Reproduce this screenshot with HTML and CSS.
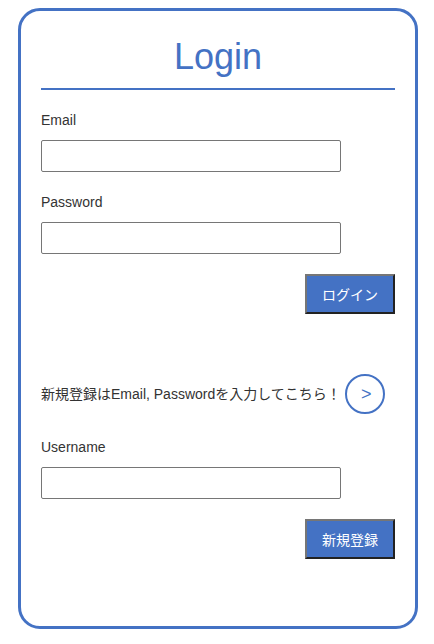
FILE: index.html
```html
<!DOCTYPE html>
<html lang="ja">
<head>
<meta charset="utf-8">
<title>Login</title>
<link rel="stylesheet" href="styles.css">
</head>
<body>
<div class="card">
  <h1 class="title">Login</h1>
  <label class="label" for="email">Email</label>
  <input class="field" id="email" type="text">
  <label class="label" for="password">Password</label>
  <input class="field" id="password" type="password">
  <div class="actions">
    <button class="btn" type="button">ログイン</button>
  </div>
  <div class="signup-row">
    <span class="signup-text">新規登録はEmail, Passwordを入力してこちら！</span>
    <button class="circle-btn" type="button">&gt;</button>
  </div>
  <label class="label label-user" for="username">Username</label>
  <input class="field" id="username" type="text">
  <div class="actions">
    <button class="btn" type="button">新規登録</button>
  </div>
</div>
</body>
</html>
```

FILE: styles.css
```css
body {
  margin: 8px;
  font-family: "Liberation Sans", Arial, "Noto Sans CJK JP", sans-serif;
  color: #333;
  background: #fff;
}

.card {
  margin-left: 10px;
  width: 400px;
  height: 621px;
  box-sizing: border-box;
  border: 3px solid #4472c4;
  border-radius: 22px;
  padding: 25px 20px 0;
}

.title {
  margin: 0;
  font-size: 36px;
  font-weight: normal;
  line-height: 42px;
  text-align: center;
  color: #4472c4;
  padding-bottom: 10px;
  border-bottom: 2px solid #4472c4;
}

.label {
  display: block;
  font-size: 14px;
  line-height: 16px;
  margin-top: 22px;
  margin-bottom: 12px;
}

.label-user {
  margin-top: 25px;
}

.field {
  display: block;
  box-sizing: border-box;
  width: 300px;
  height: 32px;
  margin: 0;
  border: 1px solid #767676;
  border-radius: 2px;
  background: #fff;
}

.actions {
  display: flex;
  justify-content: flex-end;
  margin-top: 20px;
}

.btn {
  width: 90px;
  height: 40px;
  box-sizing: border-box;
  margin: 0;
  padding: 0;
  background: #4472c4;
  color: #fff;
  font-family: "Liberation Sans", Arial, "Noto Sans CJK JP", sans-serif;
  font-size: 14px;
  border-style: solid;
  border-width: 2px;
  border-color: #767676 #222 #222 #767676;
}

.signup-row {
  display: flex;
  align-items: center;
  margin-top: 60px;
  height: 40px;
}

.signup-text {
  font-size: 14px;
  line-height: 16px;
  white-space: nowrap;
}

.circle-btn {
  width: 40px;
  height: 40px;
  box-sizing: border-box;
  margin: 0 0 0 4px;
  padding: 0 0 0 3px;
  border: 2px solid #4472c4;
  border-radius: 50%;
  background: #fff;
  color: #4472c4;
  font-family: "Liberation Sans", Arial, sans-serif;
  font-size: 18px;
  line-height: 1;
  flex: none;
}
```
